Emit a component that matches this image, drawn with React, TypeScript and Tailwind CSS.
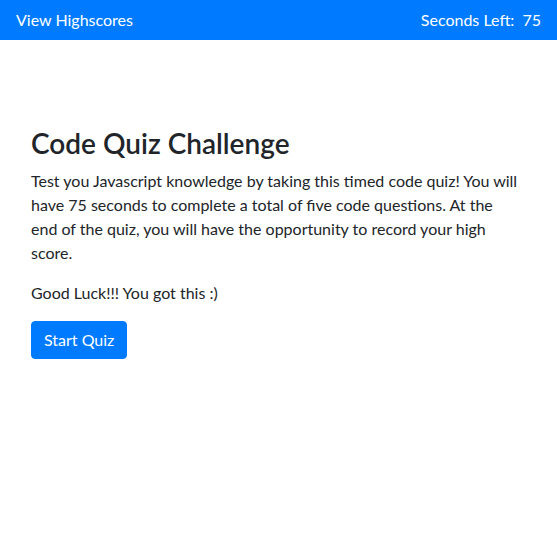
export default function App() {
  return (
    <div className="min-h-[553px] bg-white text-[#212529]" style={{ fontFamily: 'Lato, "Noto Sans", sans-serif' }}>
      <nav className="flex h-10 items-center justify-between bg-[#007bff] px-4 text-base text-white">
        <a className="leading-6">View Highscores</a>
        <div className="leading-6">
          Seconds Left: <span className="ml-1">75</span>
        </div>
      </nav>
      <main className="px-[31px] pt-[87px]">
        <h1 className="mb-2 text-[28px] font-semibold leading-[1.2]">Code Quiz Challenge</h1>
        <p className="mb-4 text-base leading-6">
          Test you Javascript knowledge by taking this timed code quiz! You will
          <br />
          have 75 seconds to complete a total of five code questions. At the
          <br />
          end of the quiz, you will have the opportunity to record your high
          <br />
          score.
        </p>
        <p className="mb-4 text-base leading-6">Good Luck!!! You got this :)</p>
        <button className="rounded-[4px] border border-[#007bff] bg-[#007bff] px-3 py-[6px] text-base leading-6 text-white">
          Start Quiz
        </button>
      </main>
    </div>
  );
}
